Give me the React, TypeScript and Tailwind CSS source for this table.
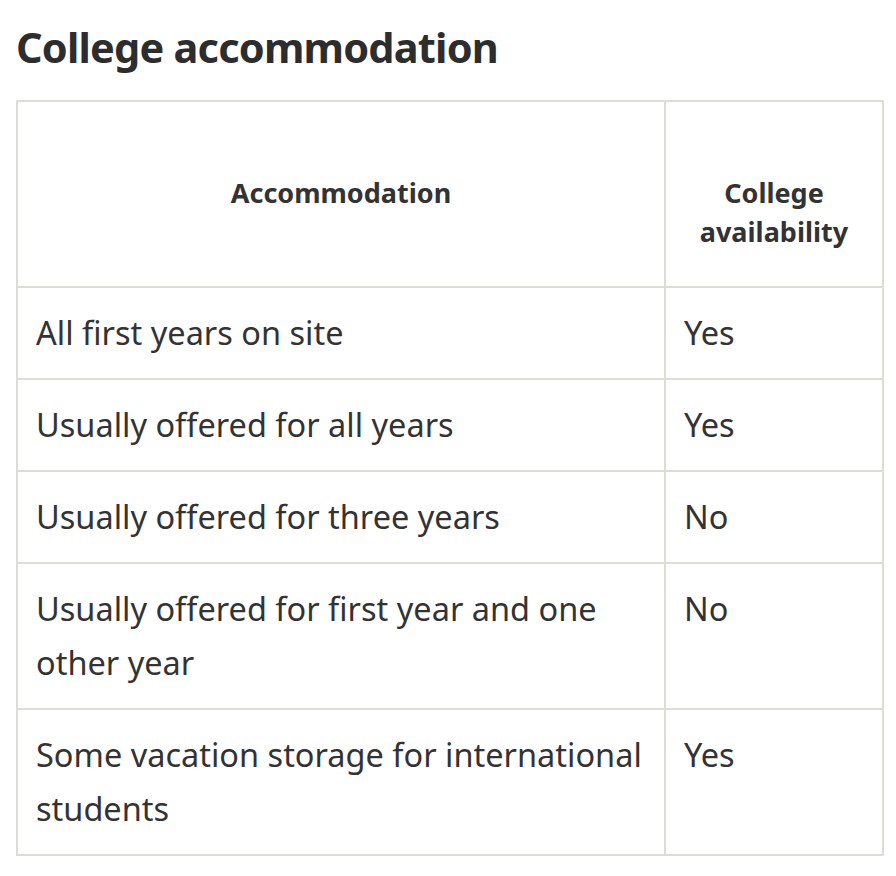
import React from "react";

const rows: [string, string][] = [
  ["All first years on site", "Yes"],
  ["Usually offered for all years", "Yes"],
  ["Usually offered for three years", "No"],
  ["Usually offered for first year and one other year", "No"],
  ["Some vacation storage for international students", "Yes"],
];

export default function App() {
  return (
    <div className="min-h-[876px] bg-white pl-4 font-['Noto_Sans',sans-serif] text-[#333333]">
      <h2 className="pt-[22px] text-[41.5px] font-bold leading-[50px] tracking-[-0.8px] text-[#2d2d2d]">
        College accommodation
      </h2>
      <div className="mt-[28px] grid w-[868px] grid-cols-[648px_218px] border-l-2 border-t-2 border-[#dddcd7]">
        <div className="h-[186px] border-b-2 border-r-2 border-[#dddcd7] px-[18px] pt-[71px] text-center text-[27px] font-bold leading-[39px]">
          Accommodation
        </div>
        <div className="h-[186px] border-b-2 border-r-2 border-[#dddcd7] px-[18px] pt-[71px] text-center text-[27px] font-bold leading-[39px]">
          College availability
        </div>
        {rows.map(([a, b]) => (
          <React.Fragment key={a}>
            <div className="border-b-2 border-r-2 border-[#dddcd7] px-[18px] py-[18px] text-[32.5px] leading-[54px]">
              {a}
            </div>
            <div className="border-b-2 border-r-2 border-[#dddcd7] px-[18px] py-[18px] text-[32.5px] leading-[54px]">
              {b}
            </div>
          </React.Fragment>
        ))}
      </div>
    </div>
  );
}
